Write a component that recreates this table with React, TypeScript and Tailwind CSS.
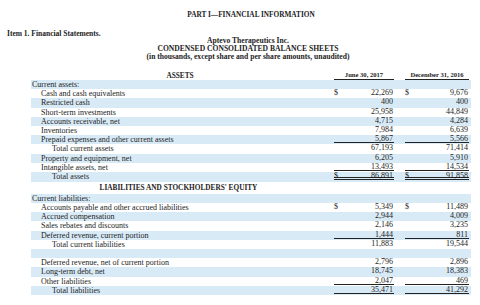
import React from 'react';

type Row = {
  label: string;
  indent?: 0 | 1 | 2;
  a?: string;
  b?: string;
  dollar?: boolean;
  line?: 'single' | 'double';
  kind?: 'normal' | 'total' | 'heading';
};

const rows: Row[] = [
  { label: 'Current assets:', indent: 0 },
  { label: 'Cash and cash equivalents', indent: 1, a: '22,269', b: '9,676', dollar: true },
  { label: 'Restricted cash', indent: 1, a: '400', b: '400' },
  { label: 'Short-term investments', indent: 1, a: '25,958', b: '44,849' },
  { label: 'Accounts receivable, net', indent: 1, a: '4,715', b: '4,284' },
  { label: 'Inventories', indent: 1, a: '7,984', b: '6,639' },
  { label: 'Prepaid expenses and other current assets', indent: 1, a: '5,867', b: '5,566', line: 'single' },
  { label: 'Total current assets', indent: 2, a: '67,193', b: '71,414' },
  { label: 'Property and equipment, net', indent: 1, a: '6,205', b: '5,910' },
  { label: 'Intangible assets, net', indent: 1, a: '13,493', b: '14,534', line: 'single' },
  { label: 'Total assets', indent: 2, a: '86,891', b: '91,858', dollar: true, line: 'double', kind: 'total' },
  { label: "LIABILITIES AND STOCKHOLDERS' EQUITY", kind: 'heading' },
  { label: 'Current liabilities:', indent: 0 },
  { label: 'Accounts payable and other accrued liabilities', indent: 1, a: '5,349', b: '11,489', dollar: true },
  { label: 'Accrued compensation', indent: 1, a: '2,944', b: '4,009' },
  { label: 'Sales rebates and discounts', indent: 1, a: '2,146', b: '3,235' },
  { label: 'Deferred revenue, current portion', indent: 1, a: '1,444', b: '811', line: 'single' },
  { label: 'Total current liabilities', indent: 2, a: '11,883', b: '19,544' },
  { label: '', indent: 0 },
  { label: 'Deferred revenue, net of current portion', indent: 1, a: '2,796', b: '2,896' },
  { label: 'Long-term debt, net', indent: 1, a: '18,745', b: '18,383' },
  { label: 'Other liabilities', indent: 1, a: '2,047', b: '469', line: 'single' },
  { label: 'Total liabilities', indent: 2, a: '35,471', b: '41,292', line: 'single' },
];

const indentClass = ['pl-[1px]', 'pl-[10px]', 'pl-[21px]'];

function Amount({ value, dollar, line, width }: { value?: string; dollar?: boolean; line?: Row['line']; width: string }) {
  const border =
    line === 'double'
      ? 'border-b-[3px] border-double border-[#222]'
      : line === 'single'
        ? 'border-b border-[#222]'
        : 'border-b border-transparent';
  return (
    <div className={`${width} h-[8px] leading-[8px] flex justify-between ${border}`}>
      <span>{dollar ? '$' : ''}</span>
      <span className="pr-[1px]">{value ?? ''}</span>
    </div>
  );
}

export default function App() {
  return (
    <div className="w-[480px] h-[305px] bg-white overflow-hidden text-[#1c1c1c] font-['Liberation_Serif','Times_New_Roman',serif]">
      <div className="pt-[11px] h-[19px] leading-[8px] text-[7.3px] font-bold text-center pl-[22px]">
        PART I—FINANCIAL INFORMATION
      </div>
      <div className="mt-[11px] h-[7px] leading-[7px] text-[7.5px] font-bold pl-[7px]">Item 1. Financial Statements.</div>
      <div className="text-[7.6px] font-bold text-center leading-[8px] pl-[16px]">
        <div>Aptevo Therapeutics Inc.</div>
        <div>CONDENSED CONSOLIDATED BALANCE SHEETS</div>
        <div>(in thousands, except share and per share amounts, unaudited)</div>
      </div>

      {/* column headings */}
      <div className="ml-[31px] w-[440px] h-[19px] flex items-end font-bold">
        <div className="w-[303px] text-center text-[7.3px] leading-[8px] pr-[5px]">ASSETS</div>
        <div className="w-[60px] text-center text-[6.6px] leading-[8px] border-b border-[#222]">June 30, 2017</div>
        <div className="w-[11px]" />
        <div className="w-[64px] text-center text-[6.6px] leading-[8px] border-b border-[#222]">December 31, 2016</div>
      </div>

      {/* balance sheet rows */}
      <div className="ml-[31px] w-[440px] flex flex-col text-[8px]">
        {rows.map((r, i) => {
          const band = i % 2 === 0 ? 'bg-[#d9eaf7]' : 'bg-white';
          if (r.kind === 'heading') {
            return (
              <div key={i} className={`${band} h-[12px] flex items-center`}>
                <div className="w-[303px] text-center text-[7.3px] font-bold pr-[8px] pt-[1px]">{r.label}</div>
              </div>
            );
          }
          return (
            <div key={i} className={`${band} ${r.kind === 'total' ? 'h-[10px]' : 'h-[9.2px]'} flex items-start`}>
              <div className={`w-[303px] leading-[9px] whitespace-nowrap ${indentClass[r.indent ?? 0]}`}>{r.label}</div>
              <Amount value={r.a} dollar={r.dollar} line={r.line} width="w-[60px]" />
              <div className="w-[11px]" />
              <Amount value={r.b} dollar={r.dollar} line={r.line} width="w-[64px]" />
            </div>
          );
        })}
      </div>
    </div>
  );
}
